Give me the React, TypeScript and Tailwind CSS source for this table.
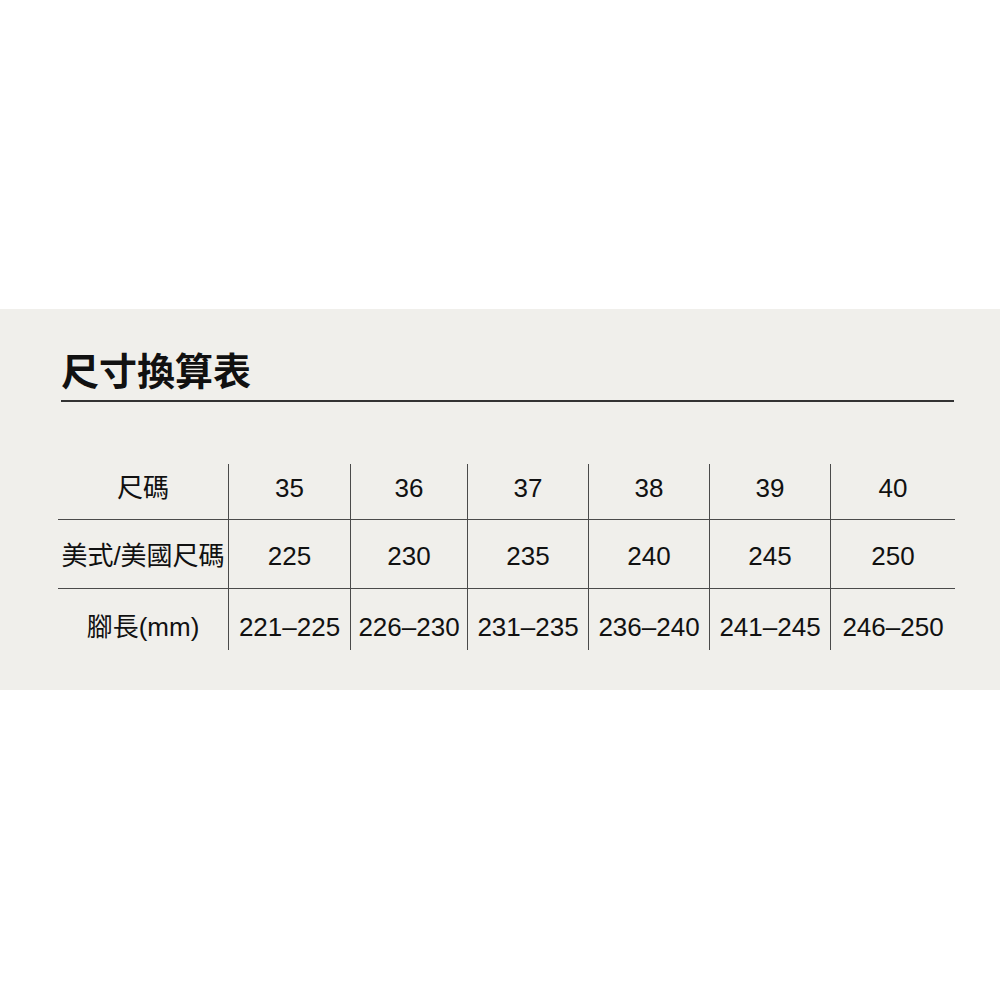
const sizes = ['35', '36', '37', '38', '39', '40'];
const us = ['225', '230', '235', '240', '245', '250'];
const foot = ['221–225', '226–230', '231–235', '236–240', '241–245', '246–250'];

const rows: { label: string; values: string[]; h: string; pt: string; border: boolean }[] = [
  { label: '尺碼', values: sizes, h: 'h-[56px]', pt: 'pt-[9px]', border: true },
  { label: '美式/美國尺碼', values: us, h: 'h-[69px]', pt: 'pt-[21px]', border: true },
  { label: '腳長(mm)', values: foot, h: 'h-[61px]', pt: 'pt-[23px]', border: false },
];

const cols = ['w-[170px]', 'w-[122px]', 'w-[117px]', 'w-[121px]', 'w-[121px]', 'w-[121px]', 'w-[125px]'];

export default function App() {
  return (
    <div className="w-[1000px] h-[1000px] bg-white" style={{ fontFamily: '"Liberation Sans", "Noto Sans CJK TC", sans-serif' }}>
      <div className="h-[309px]" />
      <div className="h-[381px] bg-[#f0efeb] pt-[35px]">
        {/* Title */}
        <div className="ml-[61px] mr-[46px] border-b-2 border-[#333] pb-[6px]">
          <h1
            className="text-[38px] leading-[50px] font-bold text-[#111]"
            style={{ fontFamily: '"Noto Sans CJK TC", sans-serif' }}
          >
            尺寸換算表
          </h1>
        </div>

        {/* Table */}
        <div className="ml-[58px] mt-[62px] w-[897px] flex flex-col">
          {rows.map((row) => (
            <div key={row.label} className={`flex ${row.h} ${row.border ? 'border-b border-[#4a4a4a]' : ''}`}>
              {[row.label, ...row.values].map((v, i) => (
                <div
                  key={i}
                  className={`${cols[i]} ${row.pt} ${i > 0 ? 'border-l border-[#4a4a4a]' : ''} text-center text-[26px] leading-[30px] text-[#111] whitespace-nowrap`}
                >
                  {v}
                </div>
              ))}
            </div>
          ))}
        </div>
      </div>
    </div>
  );
}
